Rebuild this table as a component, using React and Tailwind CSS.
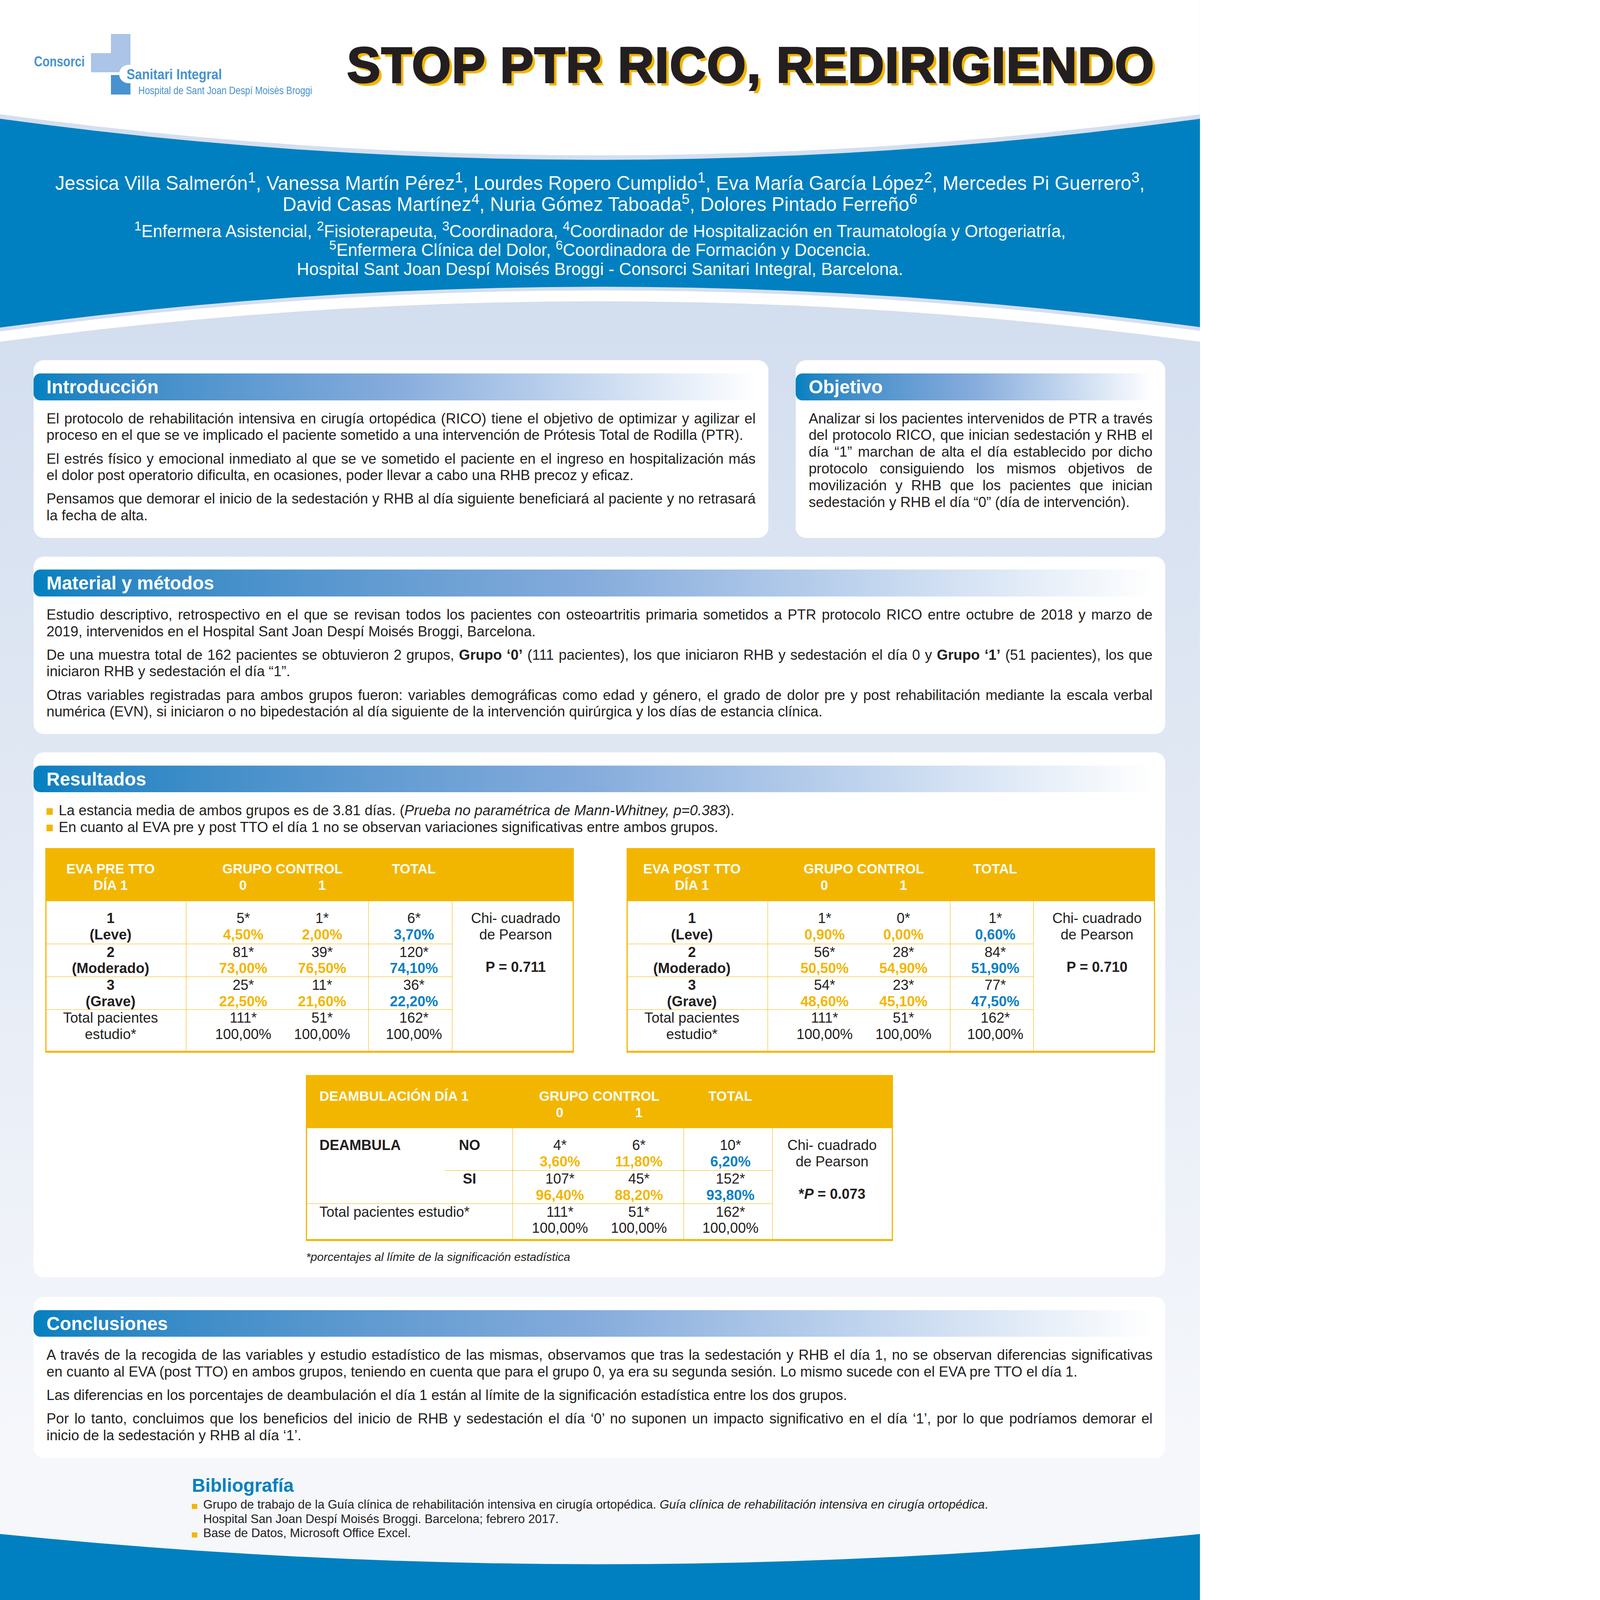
import { Fragment } from 'react'

// Poster: "STOP PTR RICO, REDIRIGIENDO" — header band, section cards, result tables.
// Laid out on the poster's own 5315px grid, then fitted to the real viewport width.

const YEL = 'text-[#f3b600]'
const BLU = 'text-[#0a80c3]'

function Logo() {
  return (
    <div className="relative ml-[148px] mt-[150px] h-[275px] w-[1240px] shrink-0 text-[#4893cf]">
      <div className="absolute left-[343px] top-0 h-[170px] w-[87px] bg-[#abc4e7]" />
      <div className="absolute left-[255px] top-[86px] h-[84px] w-[88px] bg-[#abc4e7]" />
      <div className="absolute left-[343px] top-[182px] h-[86px] w-[87px] bg-[#4893cf]" />
      <div className="absolute left-[379px] top-[137px] h-[81px] w-[480px] rounded-l-full bg-white" />
      <span className="absolute left-[3px] top-[91px] origin-left scale-x-[0.81] text-[64px] font-bold leading-none">
        Consorci
      </span>
      <span className="absolute left-[413px] top-[147px] origin-left scale-x-[0.86] whitespace-nowrap text-[65px] font-bold leading-none">
        Sanitari Integral
      </span>
      <span className="absolute left-[464px] top-[228px] origin-left scale-x-[0.85] whitespace-nowrap text-[47px] leading-none">
        Hospital de Sant Joan Despí Moisès Broggi
      </span>
    </div>
  )
}

function Card({ title, className = '', children }) {
  return (
    <section className={`rounded-[45px] bg-white pt-[58px] pb-[60px] ${className}`}>
      <h2 className="mr-[56px] flex h-[119px] items-center rounded-l-[30px] bg-linear-to-r from-[#0080c0] via-[#86acdc] to-white pl-[57px] text-[82px] font-bold text-white">
        {title}
      </h2>
      <div className="mt-[45px] px-[57px]">{children}</div>
    </section>
  )
}

function P({ children, first }) {
  return <p className={`text-justify text-[63.5px] leading-[74px] ${first ? '' : 'mt-[30px]'}`}>{children}</p>
}

// a full, justified line — keeps the poster's own line breaks
function L({ children }) {
  return <span className="block [text-align-last:justify]">{children}</span>
}

function Bullet({ children }) {
  return (
    <li className="flex gap-[26px] text-[63.5px] leading-[73px]">
      <span className="mt-[25px] h-[29px] w-[28px] shrink-0 bg-[#f3b600]" />
      <span>{children}</span>
    </li>
  )
}

function Pair({ n, pct, color }) {
  return (
    <div className="text-center">
      <div>{n}</div>
      <div className={color ? `font-bold ${color}` : ''}>{pct}</div>
    </div>
  )
}

function EvaTable({ title, rows, p }) {
  return (
    <div className="w-[2342px] border-x-[6px] border-t-[6px] border-b-[10px] border-[#f3b600] bg-white text-[63px] leading-[72px]">
      <div className="grid grid-cols-[619px_808px_369px_534px] bg-[#f3b600] pt-[52px] pb-[34px] text-[60px] font-bold text-white">
        <div className="pr-[50px] text-center">
          {title}
          <br />
          DÍA 1
        </div>
        <div className="pl-[77px] pr-[31px] text-center">
          GRUPO CONTROL
          <div className="grid grid-cols-2">
            <span>0</span>
            <span>1</span>
          </div>
        </div>
        <div className="pl-[32px] text-center">TOTAL</div>
        <div />
      </div>
      <div className="grid grid-cols-[619px_808px_369px_534px]">
        {rows.map((r, i) => {
          const last = i === rows.length - 1
          const pad = i === 0 ? 'pt-[40px] pb-[4px]' : last ? 'pb-[37px]' : ''
          const top = i === 0 ? '' : 'border-t-[3px]'
          return (
            <Fragment key={i}>
              <div className={`border-[#f3b600] pr-[50px] text-center ${last ? '' : 'font-bold'} ${pad} ${top}`}>
                {r.label[0]}
                <br />
                {r.label[1]}
              </div>
              <div className={`grid grid-cols-2 border-l-[3px] border-[#f3b600] pl-[77px] pr-[31px] ${pad} ${top}`}>
                <Pair n={r.a[0]} pct={r.a[1]} color={last ? '' : YEL} />
                <Pair n={r.b[0]} pct={r.b[1]} color={last ? '' : YEL} />
              </div>
              <div className={`border-l-[3px] border-[#f3b600] pl-[32px] ${pad} ${top}`}>
                <Pair n={r.t[0]} pct={r.t[1]} color={last ? '' : BLU} />
              </div>
              {i === 0 && (
                <div className="row-span-4 border-l-[3px] border-[#f3b600] pt-[40px] pl-[30px] text-center">
                  Chi- cuadrado
                  <br />
                  de Pearson
                  <br />
                  <br />
                  <b>P = {p}</b>
                </div>
              )}
            </Fragment>
          )
        })}
      </div>
    </div>
  )
}

const preRows = [
  { label: ['1', '(Leve)'], a: ['5*', '4,50%'], b: ['1*', '2,00%'], t: ['6*', '3,70%'] },
  { label: ['2', '(Moderado)'], a: ['81*', '73,00%'], b: ['39*', '76,50%'], t: ['120*', '74,10%'] },
  { label: ['3', '(Grave)'], a: ['25*', '22,50%'], b: ['11*', '21,60%'], t: ['36*', '22,20%'] },
  { label: ['Total pacientes', 'estudio*'], a: ['111*', '100,00%'], b: ['51*', '100,00%'], t: ['162*', '100,00%'] },
]

const postRows = [
  { label: ['1', '(Leve)'], a: ['1*', '0,90%'], b: ['0*', '0,00%'], t: ['1*', '0,60%'] },
  { label: ['2', '(Moderado)'], a: ['56*', '50,50%'], b: ['28*', '54,90%'], t: ['84*', '51,90%'] },
  { label: ['3', '(Grave)'], a: ['54*', '48,60%'], b: ['23*', '45,10%'], t: ['77*', '47,50%'] },
  { label: ['Total pacientes', 'estudio*'], a: ['111*', '100,00%'], b: ['51*', '100,00%'], t: ['162*', '100,00%'] },
]

function DeambTable() {
  return (
    <div className="w-[2600px] border-x-[6px] border-t-[6px] border-b-[10px] border-[#f3b600] bg-white text-[63px] leading-[72px]">
      <div className="grid grid-cols-[910px_757px_393px_528px] bg-[#f3b600] pt-[54px] pb-[32px] text-[60px] font-bold text-white">
        <div className="pl-[54px]">DEAMBULACIÓN DÍA 1</div>
        <div className="pl-[33px] pr-[23px] text-center">
          GRUPO CONTROL
          <div className="grid grid-cols-2">
            <span>0</span>
            <span>1</span>
          </div>
        </div>
        <div className="pl-[21px] text-center">TOTAL</div>
        <div />
      </div>
      <div className="grid grid-cols-[608px_302px_757px_393px_528px]">
        <div className="row-span-2 pt-[40px] pl-[54px] font-bold">DEAMBULA</div>
        <div className="pt-[40px] pb-[4px] pr-[80px] text-center font-bold">NO</div>
        <div className="grid grid-cols-2 border-l-[3px] border-[#f3b600] pt-[40px] pb-[4px] pl-[33px] pr-[23px]">
          <Pair n="4*" pct="3,60%" color={YEL} />
          <Pair n="6*" pct="11,80%" color={YEL} />
        </div>
        <div className="border-l-[3px] border-[#f3b600] pt-[40px] pb-[4px] pl-[21px]">
          <Pair n="10*" pct="6,20%" color={BLU} />
        </div>
        <div className="row-span-3 border-l-[3px] border-[#f3b600] pt-[40px] text-center">
          Chi- cuadrado
          <br />
          de Pearson
          <br />
          <br />
          <b>
            *<i>P</i> = 0.073
          </b>
        </div>
        <div className="border-t-[3px] border-[#f3b600] pr-[80px] text-center font-bold">SI</div>
        <div className="grid grid-cols-2 border-l-[3px] border-t-[3px] border-[#f3b600] pl-[33px] pr-[23px]">
          <Pair n="107*" pct="96,40%" color={YEL} />
          <Pair n="45*" pct="88,20%" color={YEL} />
        </div>
        <div className="border-l-[3px] border-t-[3px] border-[#f3b600] pl-[21px]">
          <Pair n="152*" pct="93,80%" color={BLU} />
        </div>
        <div className="col-span-2 border-t-[3px] border-[#f3b600] pb-[12px] pl-[54px]">Total pacientes estudio*</div>
        <div className="grid grid-cols-2 border-l-[3px] border-t-[3px] border-[#f3b600] pb-[12px] pl-[33px] pr-[23px]">
          <Pair n="111*" pct="100,00%" />
          <Pair n="51*" pct="100,00%" />
        </div>
        <div className="border-l-[3px] border-t-[3px] border-[#f3b600] pb-[12px] pl-[21px]">
          <Pair n="162*" pct="100,00%" />
        </div>
      </div>
    </div>
  )
}

export default function App() {
  // fit the 5315px poster grid into whatever CSS width the window really has
  const fit = typeof window !== 'undefined' ? Math.min(window.innerWidth / 5315, window.innerHeight / 7087) : 1

  return (
    <div
      style={{ zoom: fit }}
      className="relative h-[7087px] w-[5315px] overflow-hidden bg-linear-to-b from-[#d3deef] from-20% to-[#f5f7fb] to-90% font-['Liberation_Sans',Arial,sans-serif] text-[#231f20]"
    >
      {/* bottom wave */}
      <svg className="absolute bottom-0 left-0 h-[293px] w-full" viewBox="0 0 5315 293" preserveAspectRatio="none">
        <path d="M0 0Q2657 268 5315 0V293H0Z" fill="#0080c0" />
      </svg>

      <header className="relative h-[1530px]">
        <svg className="absolute inset-0 h-full w-full" viewBox="0 0 5315 1530" preserveAspectRatio="none">
          <path d="M0 0H5315V1514Q2657 1155 0 1514Z" fill="#ffffff" />
          <path d="M0 506Q2657 870 5315 506V1466Q2657 1105 0 1468Z" fill="#d4dff0" />
          <path d="M0 526Q2657 890 5315 526V1449Q2657 1090 0 1451Z" fill="#0080c0" />
        </svg>

        <div className="relative flex items-start">
          <Logo />
          <h1 className="ml-[149px] mt-[179px] whitespace-nowrap text-[222px] font-bold leading-none tracking-[4px] [-webkit-text-stroke:7px_#231f20] [text-shadow:14px_14px_0_#f3b600]">
            STOP PTR RICO, REDIRIGIENDO
          </h1>
        </div>

        <div className="relative mt-[339px] text-center text-white">
          <p className="whitespace-nowrap text-[85px] leading-[95px]">
            Jessica Villa Salmerón<sup>1</sup>, Vanessa Martín Pérez<sup>1</sup>, Lourdes Ropero Cumplido<sup>1</sup>, Eva
            María García López<sup>2</sup>, Mercedes Pi Guerrero<sup>3</sup>,
            <br />
            David Casas Martínez<sup>4</sup>, Nuria Gómez Taboada<sup>5</sup>, Dolores Pintado Ferreño<sup>6</sup>
          </p>
          <p className="mt-[28px] whitespace-nowrap text-[76px] leading-[84px]">
            <sup>1</sup>Enfermera Asistencial, <sup>2</sup>Fisioterapeuta, <sup>3</sup>Coordinadora, <sup>4</sup>Coordinador
            de Hospitalización en Traumatología y Ortogeriatría,
            <br />
            <sup>5</sup>Enfermera Clínica del Dolor, <sup>6</sup>Coordinadora de Formación y Docencia.
            <br />
            Hospital Sant Joan Despí Moisés Broggi - Consorci Sanitari Integral, Barcelona.
          </p>
        </div>
      </header>

      <main className="relative pl-[149px] pr-[153px] pt-[66px]">
        <div className="flex gap-[121px]">
          <Card title="Introducción" className="w-[3255px] shrink-0">
            <P first>
              <L>
                El protocolo de rehabilitación intensiva en cirugía ortopédica (RICO) tiene el objetivo de optimizar y agilizar
                el
              </L>
              proceso en el que se ve implicado el paciente sometido a una intervención de Prótesis Total de Rodilla (PTR).
            </P>
            <P>
              <L>
                El estrés físico y emocional inmediato al que se ve sometido el paciente en el ingreso en hospitalización más
              </L>
              el dolor post operatorio dificulta, en ocasiones, poder llevar a cabo una RHB precoz y eficaz.
            </P>
            <P>
              <L>
                Pensamos que demorar el inicio de la sedestación y RHB al día siguiente beneficiará al paciente y no retrasará
              </L>
              la fecha de alta.
            </P>
          </Card>
          <Card title="Objetivo" className="flex-1">
            <P first>
              <L>Analizar si los pacientes intervenidos de PTR a través</L>
              <L>del protocolo RICO, que inician sedestación y RHB el</L>
              <L>día “1” marchan de alta el día establecido por dicho</L>
              <L>protocolo consiguiendo los mismos objetivos de</L>
              <L>movilización y RHB que los pacientes que inician</L>
              sedestación y RHB el día “0” (día de intervención).
            </P>
          </Card>
        </div>

        <Card title="Material y métodos" className="mt-[83px]">
          <P first>
            <L>
              Estudio descriptivo, retrospectivo en el que se revisan todos los pacientes con osteoartritis primaria sometidos a
              PTR protocolo RICO entre octubre de 2018 y marzo de
            </L>
            2019, intervenidos en el Hospital Sant Joan Despí Moisés Broggi, Barcelona.
          </P>
          <P>
            <L>
              De una muestra total de 162 pacientes se obtuvieron 2 grupos, <b>Grupo ‘0’</b> (111 pacientes), los que iniciaron
              RHB y sedestación el día 0 y <b>Grupo ‘1’</b> (51 pacientes), los que
            </L>
            iniciaron RHB y sedestación el día “1”.
          </P>
          <P>
            <L>
              Otras variables registradas para ambos grupos fueron: variables demográficas como edad y género, el grado de dolor
              pre y post rehabilitación mediante la escala verbal
            </L>
            numérica (EVN), si iniciaron o no bipedestación al día siguiente de la intervención quirúrgica y los días de estancia
            clínica.
          </P>
        </Card>

        <Card title="Resultados" className="mt-[82px]">
          <ul className="mt-[10px]">
            <Bullet>
              La estancia media de ambos grupos es de 3.81 días. (<i>Prueba no paramétrica de Mann-Whitney, p=0.383</i>).
            </Bullet>
            <Bullet>En cuanto al EVA pre y post TTO el día 1 no se observan variaciones significativas entre ambos grupos.</Bullet>
          </ul>
          <div className="-ml-[6px] -mr-[12px] mt-[56px] flex justify-between">
            <EvaTable title="EVA PRE TTO" rows={preRows} p="0.711" />
            <EvaTable title="EVA POST TTO" rows={postRows} p="0.710" />
          </div>
          <div className="mx-auto mt-[99px] w-[2600px]">
            <DeambTable />
            <p className="mt-[41px] text-[52px] italic leading-[60px]">
              *porcentajes al límite de la significación estadística
            </p>
          </div>
        </Card>

        <Card title="Conclusiones" className="mt-[87px]">
          <P first>
            <L>
              A través de la recogida de las variables y estudio estadístico de las mismas, observamos que tras la sedestación y
              RHB el día 1, no se observan diferencias significativas
            </L>
            en cuanto al EVA (post TTO) en ambos grupos, teniendo en cuenta que para el grupo 0, ya era su segunda sesión. Lo
            mismo sucede con el EVA pre TTO el día 1.
          </P>
          <P>
            Las diferencias en los porcentajes de deambulación el día 1 están al límite de la significación estadística entre los
            dos grupos.
          </P>
          <P>
            <L>
              Por lo tanto, concluimos que los beneficios del inicio de RHB y sedestación el día ‘0’ no suponen un impacto
              significativo en el día ‘1’, por lo que podríamos demorar el
            </L>
            inicio de la sedestación y RHB al día ‘1’.
          </P>
        </Card>

        <section className="ml-[701px] mt-[75px]">
          <h3 className="text-[82px] font-bold leading-[96px] text-[#0080c0]">Bibliografía</h3>
          <ul className="mt-[7px] text-[54px] leading-[63px]">
            <li className="flex gap-[26px]">
              <span className="mt-[27px] h-[22px] w-[24px] shrink-0 bg-[#f3b600]" />
              <span>
                Grupo de trabajo de la Guía clínica de rehabilitación intensiva en cirugía ortopédica.{' '}
                <i>Guía clínica de rehabilitación intensiva en cirugía ortopédica</i>.
                <br />
                Hospital San Joan Despí Moisés Broggi. Barcelona; febrero 2017.
              </span>
            </li>
            <li className="flex gap-[26px]">
              <span className="mt-[27px] h-[22px] w-[24px] shrink-0 bg-[#f3b600]" />
              <span>Base de Datos, Microsoft Office Excel.</span>
            </li>
          </ul>
        </section>
      </main>
    </div>
  )
}
